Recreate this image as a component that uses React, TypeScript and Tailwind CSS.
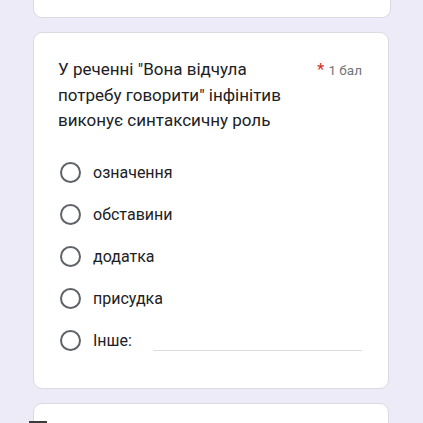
import React from "react";

const options = ["означення", "обставини", "додатка", "присудка"];

const Radio = () => (
  <div className="w-[21px] h-[21px] rounded-full border-2 border-[#5f6368] shrink-0" />
);

const App = () => {
  return (
    <div
      className="w-[423px] h-[423px] bg-[#edebf7] overflow-hidden relative flex flex-col"
      style={{ fontFamily: "Roboto, 'Noto Sans', sans-serif" }}
    >
      {/* previous card */}
      <div className="mx-[33px] w-[356px] h-[17px] shrink-0 -mt-[10px] pt-[10px] bg-white rounded-b-[9px] border border-t-0 border-[#dcd9e3] box-content" />

      {/* question card */}
      <div className="ml-[33px] mt-[14px] w-[356px] h-[357px] shrink-0 bg-white rounded-[9px] border border-[#dcd9e3] pt-[24px] pl-[24px] pr-[26px]">
        <div className="flex">
          <div className="w-[240px] text-[17px] leading-[25.5px] text-[#202124]">
            У реченні "Вона відчула потребу говорити" інфінітив виконує
            синтаксичну роль
          </div>
          <div className="ml-auto flex items-start pt-[1px]">
            <span className="text-[#d93025] text-[17px] leading-[22px] mr-[4px]">*</span>
            <span className="text-[13.5px] leading-[24px] text-[#70757a]">1 бал</span>
          </div>
        </div>
        <div className="mt-[18px] flex flex-col">
          {options.map((o) => (
            <div key={o} className="h-[42px] flex items-center pl-[2px]">
              <Radio />
              <span className="ml-[12px] text-[16px] text-[#202124]">{o}</span>
            </div>
          ))}
          <div className="h-[42px] flex items-center pl-[2px]">
            <Radio />
            <span className="ml-[12px] text-[16px] text-[#202124]">Інше:</span>
            <div className="ml-[21px] flex-1 mt-[20px] border-b border-[#dadce0]" />
          </div>
        </div>
      </div>

      {/* next card */}
      <div className="ml-[33px] mt-[14px] w-[356px] h-[40px] shrink-0 bg-white rounded-t-[9px] border border-[#dcd9e3]" />
      <div className="absolute left-[29px] top-[421px] w-[18px] h-[2px] bg-[#3c3c3c]" />
    </div>
  );
};

export default App;
